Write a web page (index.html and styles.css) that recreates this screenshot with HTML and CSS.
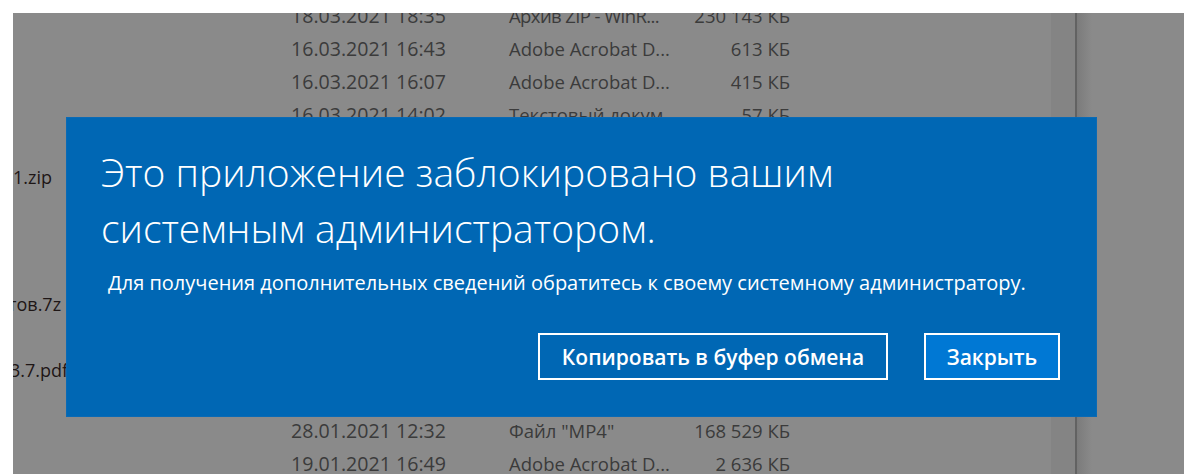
FILE: index.html
```html
<!DOCTYPE html>
<html lang="ru">
<head>
<meta charset="utf-8">
<title>Проводник</title>
<link rel="stylesheet" href="styles.css">
</head>
<body>
<div class="screen">
  <div class="files">
    <div class="list">
      <div class="row"><span class="name"></span><span class="date">18.03.2021 18:35</span><span class="type type-tight">Архив ZIP - WinR...</span><span class="size">230 143 КБ</span></div>
      <div class="row"><span class="name"></span><span class="date">16.03.2021 16:43</span><span class="type">Adobe Acrobat D...</span><span class="size">613 КБ</span></div>
      <div class="row"><span class="name"></span><span class="date">16.03.2021 16:07</span><span class="type">Adobe Acrobat D...</span><span class="size">415 КБ</span></div>
      <div class="row"><span class="name"></span><span class="date">16.03.2021 14:02</span><span class="type">Текстовый докум...</span><span class="size">57 КБ</span></div>
      <div class="row"><span class="name"></span><span class="date"></span><span class="type"></span><span class="size"></span></div>
      <div class="row row-up"><span class="name">1.zip</span><span class="date"></span><span class="type"></span><span class="size"></span></div>
      <div class="row"><span class="name"></span><span class="date"></span><span class="type"></span><span class="size"></span></div>
      <div class="row"><span class="name"></span><span class="date"></span><span class="type"></span><span class="size"></span></div>
      <div class="group"></div>
      <div class="row"><span class="name"><span class="tail tail-5">тов.7z</span></span><span class="date"></span><span class="type"></span><span class="size"></span></div>
      <div class="row"><span class="name"></span><span class="date"></span><span class="type"></span><span class="size"></span></div>
      <div class="row"><span class="name"><span class="tail tail-3">3.7.pdf</span></span><span class="date"></span><span class="type"></span><span class="size"></span></div>
      <div class="group group-tall"></div>
      <div class="row"><span class="name"></span><span class="date">28.01.2021 12:32</span><span class="type">Файл "MP4"</span><span class="size">168 529 КБ</span></div>
      <div class="row"><span class="name"></span><span class="date">19.01.2021 16:49</span><span class="type">Adobe Acrobat D...</span><span class="size">2 636 КБ</span></div>
    </div>
  </div>
  <div class="track"></div>
  <div class="divider"></div>
  <div class="pane"></div>

  <div class="dialog" role="alertdialog">
    <h1 class="dialog-title">Это приложение заблокировано вашим<br>системным администратором.</h1>
    <p class="dialog-text">Для получения дополнительных сведений обратитесь к своему системному администратору.</p>
    <div class="dialog-actions">
      <button class="btn btn-copy" type="button">Копировать в буфер обмена</button>
      <button class="btn btn-close" type="button">Закрыть</button>
    </div>
  </div>
</div>
</body>
</html>
```

FILE: styles.css
```css
html, body {
  margin: 0;
  background: #ffffff;
  font-family: "Open Sans", "Noto Sans", sans-serif;
}

.screen {
  position: relative;
  display: flex;
  margin: 13px 0 0 13px;
  height: 461px;
  background: #8a8a8a;
  overflow: hidden;
}

/* file list behind the dimmed overlay */
.files {
  flex: 0 0 1038px;
  overflow: hidden;
}

.list {
  margin-top: -14px;
}

.row {
  display: grid;
  grid-template-columns: 278px 218px 170px 111px;
  height: 33px;
  align-items: center;
  font-size: 19px;
  color: #3b3b3b;
  white-space: nowrap;
}

.row-up {
  align-items: start;
  padding-top: 1px;
  box-sizing: border-box;
}

.date {
  font-size: 19.6px;
}

.type {
  font-size: 18.5px;
}

.type-tight {
  letter-spacing: -0.6px;
}

.size {
  font-size: 18.5px;
  text-align: right;
}

.group {
  height: 24px;
}

.group-tall {
  height: 28px;
}

.name {
  font-size: 18px;
  color: #1e1616;
  overflow: hidden;
}

/* file names are scrolled partly out of view on the left */
.tail {
  display: inline-block;
}

.tail-3 {
  margin-left: -3px;
}

.tail-5 {
  margin-left: -5px;
}

.track {
  flex: 0 0 24px;
  background: #848484;
}

.divider {
  flex: 0 0 2px;
  background: #626262;
}

.pane {
  flex: 1;
  background: linear-gradient(to right, #7b7b7b, #8a8a8a 15px);
}

/* blocked-app message */
.dialog {
  position: absolute;
  left: 53px;
  top: 104px;
  width: 1031px;
  height: 300px;
  box-sizing: border-box;
  display: flex;
  flex-direction: column;
  padding: 26px 36px 36px 34px;
  background: #0067b4;
  border: 1px solid #0a6ab5;
  color: #ffffff;
}

.dialog-title {
  margin: 0;
  font-size: 39px;
  font-weight: 300;
  line-height: 56px;
}

.dialog-text {
  margin: 14px 0 0 7px;
  font-size: 20px;
  line-height: 26px;
}

.dialog-actions {
  display: flex;
  justify-content: flex-end;
  gap: 36px;
  margin-top: auto;
}

.btn {
  height: 47px;
  padding: 0;
  border: 2px solid #ffffff;
  background: transparent;
  color: #ffffff;
  font-family: inherit;
  font-size: 21px;
  font-weight: 600;
}

.btn-copy {
  width: 350px;
}

.btn-close {
  width: 136px;
  background: #0078d4;
}
```
